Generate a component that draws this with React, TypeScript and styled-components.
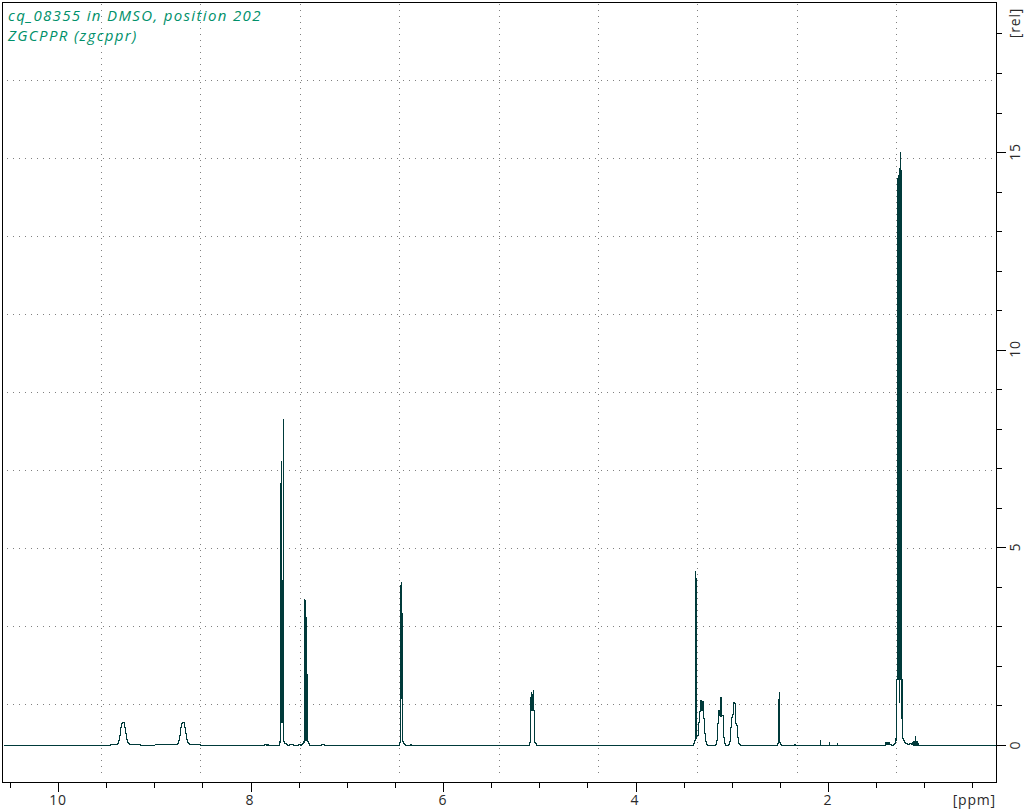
import React from "react";
import styled, { createGlobalStyle } from "styled-components";

const Global = createGlobalStyle`
  html, body { margin: 0; padding: 0; background: #ffffff; }
  #root { width: 1027px; height: 811px; overflow: hidden; }
`;

const Page = styled.main`
  width: 1027px;
  height: 811px;
  background: #ffffff;
`;

const Chart = styled.svg`
  display: block;
  width: 1027px;
  height: 811px;
  shape-rendering: crispEdges;
`;

const Title = styled.text`
  font-family: "Open Sans", sans-serif;
  font-style: italic;
  font-weight: 400;
  font-size: 15px;
  letter-spacing: 1.35px;
  fill: #00906a;
`;

const AxisLabel = styled.text`
  font-family: "Open Sans", sans-serif;
  font-weight: 400;
  font-size: 14px;
  letter-spacing: 0.8px;
  fill: #2a2a2a;
  text-anchor: middle;
`;

const UnitLabel = styled(AxisLabel)`
  text-anchor: end;
`;

const Frame = styled.rect`
  fill: none;
  stroke: #000000;
  stroke-width: 1;
`;

const Tick = styled.line`
  stroke: #000000;
  stroke-width: 1;
`;

const GridLine = styled.line`
  stroke: #808080;
  stroke-width: 1;
  stroke-dasharray: 1 5;
`;

const Trace = styled.path`
  fill: none;
  stroke: #003a3a;
  stroke-width: 1;
`;

const BASE = 745;

const vGrid = [101, 200, 300, 399, 499, 598, 697, 797, 896];
const hGrid = [80, 158, 236, 314, 392, 470, 548, 626, 704];
const xLabels = [
  { x: 58, t: "10" },
  { x: 250, t: "8" },
  { x: 443, t: "6" },
  { x: 635, t: "4" },
  { x: 828, t: "2" },
];
const yLabels = [
  { y: 152, t: "15" },
  { y: 349, t: "10" },
  { y: 547, t: "5" },
  { y: 745, t: "0" },
];

// [x, top, bottom] columns of the spectrum, left to right
type Col = [number, number, number?];
const hump = (c: number): Col[] => [
  [c - 13, 744], [c - 7, 744], [c - 6, 743], [c - 5, 740], [c - 4, 735], [c - 3, 727],
  [c - 2, 723], [c - 1, 722], [c, 722], [c + 1, 727], [c + 2, 733], [c + 3, 739],
  [c + 4, 742], [c + 5, 743], [c + 7, 744], [c + 16, 744], [c + 17, 745],
];

const cols: Col[] = [
  [3, 745],
  [109, 745],
  ...hump(123),
  ...hump(183),
  [263, 745], [264, 744], [265, 744], [266, 745], [267, 744], [268, 745],
  [278, 745], [279, 741], [280, 483, 742], [281, 461, 722], [282, 580, 722], [283, 419, 741],
  [284, 741, 743], [285, 743], [286, 744], [288, 745], [289, 744], [292, 744], [293, 745],
  [297, 745], [298, 744], [299, 744], [300, 745], [301, 744], [302, 743],
  [303, 741], [304, 599, 742], [305, 600, 740], [306, 617, 740], [307, 674, 741], [308, 743], [309, 745],
  [320, 745], [321, 744], [323, 744], [324, 745],
  [398, 745], [399, 742], [400, 585, 741], [401, 582, 698], [402, 613, 741], [403, 743], [404, 744], [406, 745],
  [409, 745], [410, 744], [411, 745],
  [528, 745], [529, 742], [530, 697, 742], [531, 692, 710], [532, 694, 710], [533, 690, 710], [534, 719, 742], [535, 743], [536, 745],
  [692, 745], [693, 743], [694, 740], [695, 571, 740], [696, 578, 738], [697, 735],
  [698, 722], [699, 711], [700, 700], [701, 710], [702, 701], [703, 718], [704, 733], [705, 741], [706, 744], [708, 745],
  [714, 745], [715, 744], [716, 740], [717, 723], [718, 710], [719, 715], [720, 697, 716], [721, 697, 716], [722, 715], [723, 737], [724, 743], [725, 745],
  [727, 745], [728, 744], [729, 741], [730, 727], [731, 717], [732, 714], [733, 702], [734, 703], [735, 723], [736, 725], [737, 737], [738, 743], [739, 744], [741, 745],
  [776, 745], [777, 743], [778, 699, 743], [779, 692, 742], [780, 744], [781, 745],
  [793, 745], [794, 744], [795, 745],
  [819, 745], [820, 740, 745], [821, 745], [828, 745], [829, 742, 745], [830, 745], [836, 745], [837, 743, 745], [838, 745],
  [884, 745], [885, 742, 745], [886, 742, 744], [887, 742, 744], [888, 742, 744], [889, 742, 744], [890, 744], [892, 745],
  [893, 744], [894, 743], [895, 738], [896, 679, 740], [897, 178, 679], [898, 175, 679], [899, 168, 702], [900, 152, 679], [901, 170, 718], [902, 679, 738],
  [903, 740], [904, 742], [906, 743], [908, 744], [910, 743], [911, 744], [912, 742, 744], [913, 741, 745], [914, 741, 745], [915, 736, 745], [916, 741, 745], [917, 741, 745], [918, 743, 745], [919, 745],
  [996, 745],
];

// Each pixel column is a vertical run that reaches the previous column,
// so peaks rise in steps; gaps between sampled columns are straight lines.
const tracePath = cols
  .map(([x, top, bottom = top], i) => {
    const cx = x + 0.5;
    if (i === 0) return "";
    const [px, pt, pb = pt] = cols[i - 1];
    if (x - px > 1) {
      return `M${px + 1} ${pb + 0.5}L${x} ${top + 0.5}M${cx} ${top}V${bottom + 1}`;
    }
    const t = Math.min(top, pb);
    const b = Math.max(bottom, pt);
    return `M${cx} ${t}V${b + 1}`;
  })
  .join("");

const yTicks = Array.from({ length: 19 }, (_, i) => ({
  y: Math.round(BASE - i * 39.53),
  major: i % 5 === 0,
}));
const xTicks = Array.from({ length: 21 }, (_, i) => ({
  x: Math.round(10 + i * 48.12),
  major: (i - 1) % 4 === 0,
}));

export default function App() {
  return (
    <Page>
      <Global />
      <Chart viewBox="0 0 1027 811" xmlns="http://www.w3.org/2000/svg">
        {vGrid.map((x) => (
          <GridLine key={x} x1={x + 0.5} x2={x + 0.5} y1={4} y2={778} />
        ))}
        {hGrid.map((y) => (
          <GridLine key={y} x1={7} x2={994} y1={y + 0.5} y2={y + 0.5} />
        ))}
        <Trace d={tracePath} />
        <Frame x={2.5} y={2.5} width={994} height={779.5} />
        {yTicks.map((t) => (
          <Tick key={t.y} x1={997} x2={t.major ? 1006 : 1002} y1={t.y + 0.5} y2={t.y + 0.5} />
        ))}
        {xTicks.map((t) => (
          <Tick key={t.x} x1={t.x + 0.5} x2={t.x + 0.5} y1={782} y2={t.major ? 792 : 788} />
        ))}
        {yLabels.map((l) => (
          <AxisLabel key={l.t} transform={`translate(1020 ${l.y}) rotate(-90)`}>
            {l.t}
          </AxisLabel>
        ))}
        <AxisLabel transform="translate(1020 23) rotate(-90)">[rel]</AxisLabel>
        {xLabels.map((l) => (
          <AxisLabel key={l.t} x={l.x} y={805}>
            {l.t}
          </AxisLabel>
        ))}
        <UnitLabel x={996} y={805}>[ppm]</UnitLabel>
        <Title x={8} y={21}>cq_08355 in DMSO, position 202</Title>
        <Title x={8} y={41}>ZGCPPR (zgcppr)</Title>
      </Chart>
    </Page>
  );
}
